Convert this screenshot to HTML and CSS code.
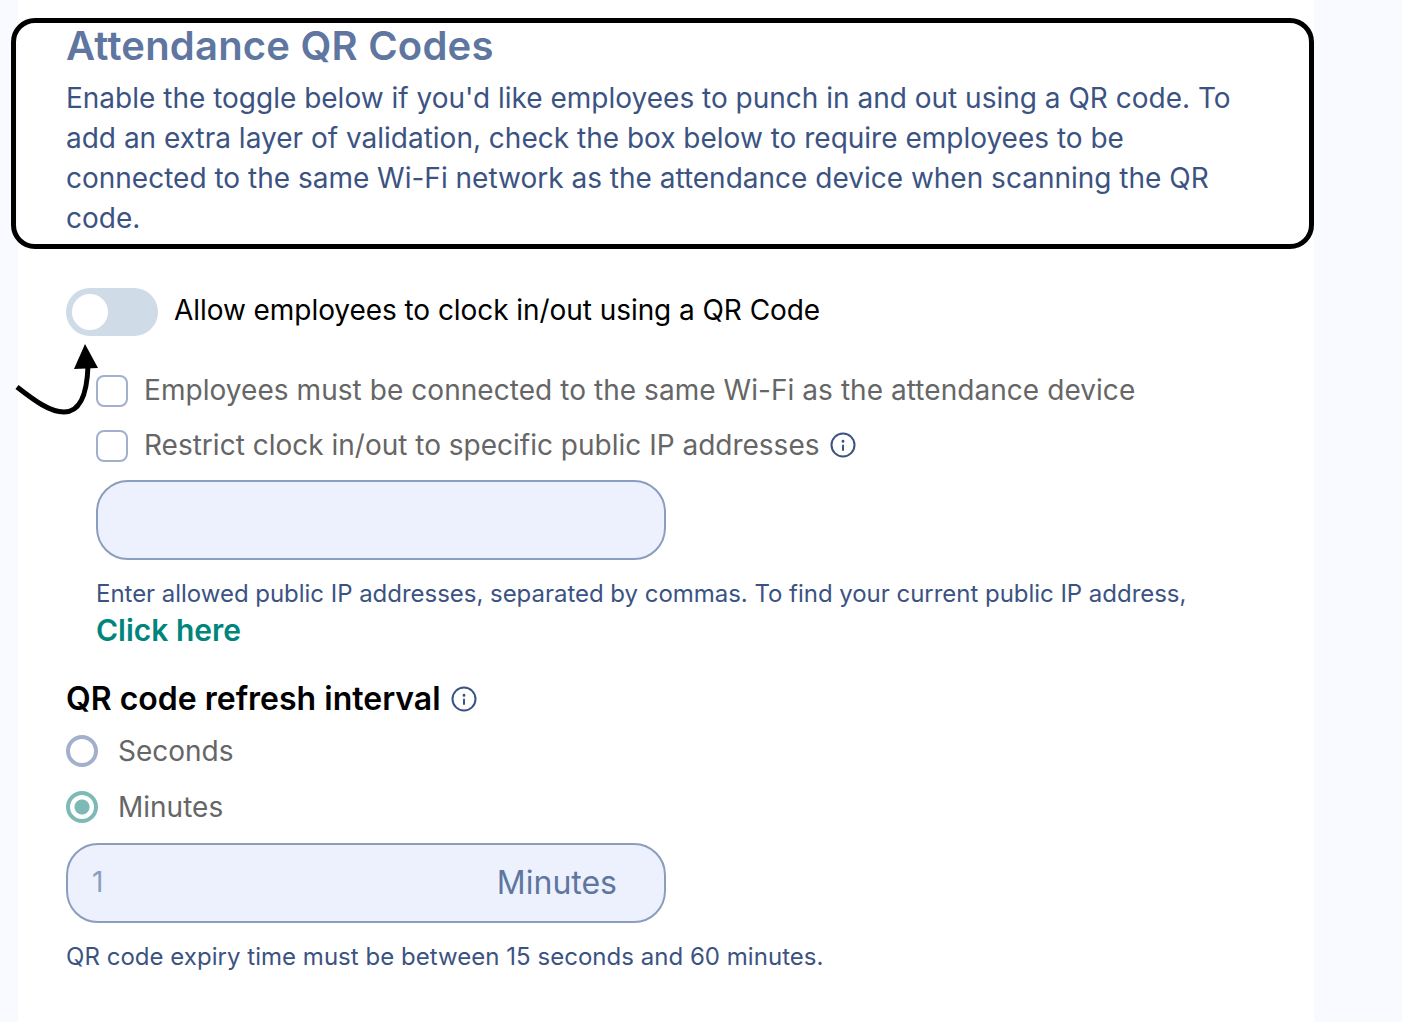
FILE: index.html
```html
<!DOCTYPE html>
<html lang="en">
<head>
<meta charset="utf-8">
<title>Attendance QR Codes</title>
<link rel="stylesheet" href="styles.css">
</head>
<body>
<main class="panel">
  <header class="intro">
    <h1 class="title">Attendance QR Codes</h1>
    <p class="desc">Enable the toggle below if you'd like employees to punch in and out using a QR code. To add an extra layer of validation, check the box below to require employees to be connected to the same Wi-Fi network as the attendance device when scanning the QR code.</p>
  </header>
  <div class="toggle-row">
    <span class="toggle"><span class="knob"></span></span>
    <span class="toggle-label">Allow employees to clock in/out using a QR Code</span>
  </div>
  <div class="checks">
    <div class="check-row"><span class="box"></span><span class="muted muted-wide">Employees must be connected to the same Wi-Fi as the attendance device</span></div>
    <div class="check-row check-row-2"><span class="box"></span><span class="muted">Restrict clock in/out to specific public IP addresses</span>
      <svg class="info" viewBox="0 0 26 26"><circle cx="13" cy="13" r="11.5"/><path d="M13 13.5v4.6"/><path class="dot" d="M13 9.2v.2"/></svg>
    </div>
    <div class="field ip-field"></div>
    <p class="hint hint-ip">Enter allowed public IP addresses, separated by commas. To find your current public IP address,</p>
    <a class="link" href="#">Click here</a>
  </div>
  <section class="interval">
    <h2 class="subtitle">QR code refresh interval
      <svg class="info" viewBox="0 0 26 26"><circle cx="13" cy="13" r="11.5"/><path d="M13 13.5v4.6"/><path class="dot" d="M13 9.2v.2"/></svg>
    </h2>
    <div class="radio-row"><span class="radio"></span><span class="muted">Seconds</span></div>
    <div class="radio-row radio-row-2"><span class="radio on"></span><span class="muted">Minutes</span></div>
    <div class="field value-field"><span class="value">1</span><span class="unit">Minutes</span></div>
    <p class="hint expiry">QR code expiry time must be between 15 seconds and 60 minutes.</p>
  </section>
</main>
<div class="highlight"></div>
<svg class="arrow" viewBox="10 340 95 80">
  <path class="shaft" d="M17 387C35 401 50 412 64 412C80 412 87 396 88 366"/>
  <path class="head" d="M85 344L74 369L98 368Z"/>
</svg>
</body>
</html>
```
FILE: styles.css
```css
* { box-sizing: border-box; }
html, body { margin: 0; height: 100%; }
body {
  background: #f9faff;
  font-family: Inter, "Liberation Sans", sans-serif;
  overflow: hidden;
  position: relative;
}
.panel {
  margin-left: 18px;
  width: 1296px;
  height: 1022px;
  background: #fff;
  padding: 22px 48px 0;
}
.title {
  margin: 0;
  font-size: 40px;
  line-height: 47px;
  font-weight: 600;
  letter-spacing: 0.2px;
  color: #5e76a0;
}
.desc {
  margin: 9px 0 0;
  width: 1175px;
  font-size: 28px;
  line-height: 40px;
  color: #3b5382;
}
.toggle-row { display: flex; align-items: center; gap: 16px; margin-top: 50px; }
.toggle { width: 92px; height: 48px; border-radius: 24px; background: #d0dbe8; padding: 6px; display: block; }
.knob { display: block; width: 36px; height: 36px; border-radius: 50%; background: #fff; }
.toggle-label { font-size: 28px; color: #000; letter-spacing: -0.06px; padding-bottom: 4px; }
.checks { padding-left: 30px; margin-top: 39px; }
.check-row { display: flex; align-items: center; gap: 16px; height: 32px; }
.check-row-2 { margin-top: 23px; }
.box { width: 32px; height: 32px; border: 2px solid #a3b0cc; border-radius: 8px; background: #fff; }
.muted { font-size: 28px; color: #666; padding-bottom: 2px; }
.muted-wide { letter-spacing: 0.055px; }
.info { width: 26px; height: 26px; margin-left: -6px; fill: none; stroke: #3b5382; stroke-width: 2; stroke-linecap: round; }
.info .dot { stroke-width: 2.8; }
.check-row .info { margin-bottom: 2px; }
.field { background: #edf1fd; border: 2px solid #8b9dbd; border-radius: 32px; width: 570px; height: 80px; }
.ip-field { margin-top: 18px; }
.hint { margin: 0; font-size: 24px; line-height: 36px; color: #3b5382; }
.checks .hint { margin-top: 16px; }
.hint-ip { letter-spacing: -0.03px; }
.link { display: block; margin-top: -1px; font-size: 30px; line-height: 38px; font-weight: 600; color: #00857d; text-decoration: none; }
.interval { margin-top: 30px; }
.subtitle { margin: 0; display: flex; align-items: center; gap: 16px; font-size: 32px; line-height: 40px; font-weight: 600; color: #000; }
.radio-row { display: flex; align-items: center; gap: 20px; height: 32px; margin-top: 16px; }
.radio-row-2 { margin-top: 24px; }
.radio-row .muted { padding-bottom: 0; }
.radio { width: 32px; height: 32px; border-radius: 50%; border: 4px solid #a3b0cc; background: #fff; }
.radio.on { border-color: #7ebab5; background: radial-gradient(circle, #7ebab5 0 7px, #fff 8px); }
.value-field { width: 600px; margin-top: 20px; display: flex; align-items: center; justify-content: space-between; padding: 0 47px 2px 24px; }
.value { font-size: 28px; color: #8b9dbd; }
.unit { font-size: 32px; color: #5e76a0; }
.expiry { margin-top: 16px; letter-spacing: 0.03px; }
.highlight { position: absolute; left: 11px; top: 18px; width: 1303px; height: 231px; border: 5px solid #000; border-radius: 24px; pointer-events: none; }
.arrow { position: absolute; left: 10px; top: 340px; width: 95px; height: 80px; }
.shaft { fill: none; stroke: #000; stroke-width: 5; }
.head { fill: #000; }
```
